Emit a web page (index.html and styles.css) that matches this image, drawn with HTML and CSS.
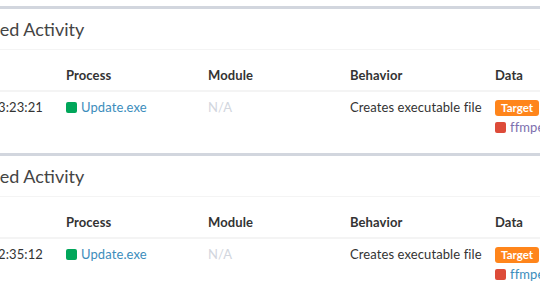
FILE: index.html
```html
<!DOCTYPE html>
<html lang="en">
<head>
  <meta charset="UTF-8" />
  <title>Related Activity</title>
  <link rel="stylesheet" href="styles.css">
</head>
<body>

<div class="page">
  <div class="box">
    <div class="box-header">
      <h3 class="box-title">Related Activity</h3>
    </div>
    <div class="box-body">
      <table class="table">
        <colgroup>
          <col class="col"><col class="col"><col class="col"><col class="col"><col class="col">
        </colgroup>
        <thead>
          <tr>
            <th>Time</th>
            <th>Process</th>
            <th>Module</th>
            <th>Behavior</th>
            <th>Data</th>
          </tr>
        </thead>
        <tbody>
          <tr>
            <td>2017-03-14 13:23:21</td>
            <td><span class="sq sq-green"></span><a href="#">Update.exe</a></td>
            <td class="muted">N/A</td>
            <td>Creates executable file</td>
            <td>
              <span class="label">Target</span><br>
              <span class="sq sq-red"></span><a href="#" class="visited">ffmpeg.dll</a>
            </td>
          </tr>
        </tbody>
      </table>
    </div>
  </div>

  <div class="box">
    <div class="box-header">
      <h3 class="box-title">Related Activity</h3>
    </div>
    <div class="box-body">
      <table class="table">
        <colgroup>
          <col class="col"><col class="col"><col class="col"><col class="col"><col class="col">
        </colgroup>
        <thead>
          <tr>
            <th>Time</th>
            <th>Process</th>
            <th>Module</th>
            <th>Behavior</th>
            <th>Data</th>
          </tr>
        </thead>
        <tbody>
          <tr>
            <td>2017-03-14 12:35:12</td>
            <td><span class="sq sq-green"></span><a href="#">Update.exe</a></td>
            <td class="muted">N/A</td>
            <td>Creates executable file</td>
            <td>
              <span class="label">Target</span><br>
              <span class="sq sq-red"></span><a href="#">ffmpeg.dll</a>
            </td>
          </tr>
        </tbody>
      </table>
    </div>
  </div>
</div>

</body>
</html>
```

FILE: styles.css
```css
body {
  margin: 0;
  background: #fff;
  font-family: Lato, "Open Sans", sans-serif;
  font-size: 13px;
  letter-spacing: 0.1px;
  color: #333;
  overflow: hidden;
}
.page {
  padding-top: 6px;
  margin-left: -94px;
  width: 800px;
}
.box {
  background: #fff;
  border-top: 3px solid #d2d6de;
  margin-bottom: 8px;
}
.box-header {
  height: 40px;
  border-bottom: 1px solid #f4f4f4;
  display: flex;
  align-items: center;
}
.box-title {
  margin: 0 0 0 54px;
  font-size: 18px;
  font-weight: normal;
  letter-spacing: 0;
  color: #444;
  line-height: 1;
}
.box-body {
  padding: 5px 10px 0;
}
.table {
  border-collapse: collapse;
  table-layout: fixed;
  width: 710px;
}
.col {
  width: 142px;
}
.table th,
.table td {
  text-align: left;
  vertical-align: top;
  line-height: 20px;
  overflow: hidden;
}
.table th {
  font-weight: bold;
  border-bottom: 2px solid #f4f4f4;
  padding: 10px 8px 5px;
}
.table td {
  padding: 5px 8px 8px;
  white-space: nowrap;
}
.table td:first-child {
  text-align: right;
  padding-left: 0;
  padding-right: 20px;
}
.table th:last-child,
.table td:last-child {
  padding-left: 11px;
}
a {
  color: #3c8dbc;
  text-decoration: none;
}
a.visited {
  color: #7d6fae;
}
.muted {
  color: #d2d6de;
}
.sq {
  display: inline-block;
  width: 11px;
  height: 11px;
  border-radius: 2px;
  margin-right: 4px;
  vertical-align: -1px;
}
.sq-green {
  background: #00a65a;
}
.sq-red {
  background: #dd4b39;
}
.label {
  display: inline-block;
  background: #ff851b;
  color: #fff;
  font-size: 11.5px;
  font-weight: bold;
  letter-spacing: 0;
  line-height: 1;
  padding: 2px 6px 2px;
  border-radius: 3px;
}
```
